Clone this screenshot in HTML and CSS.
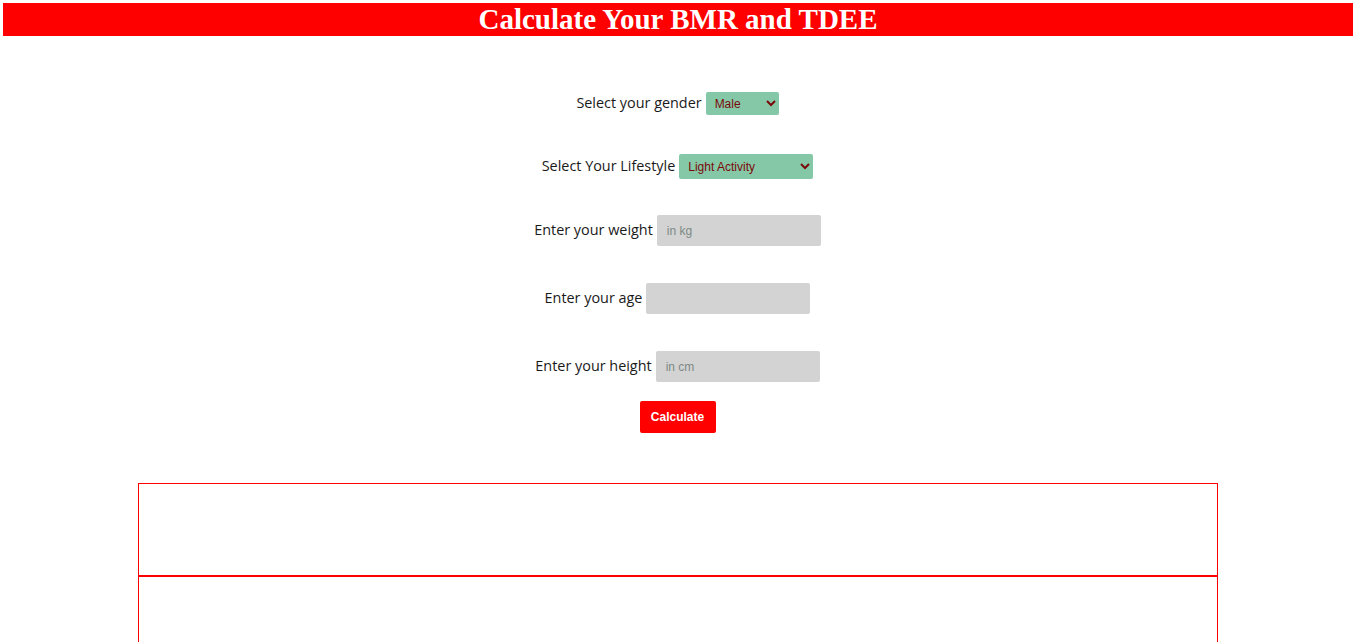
FILE: index.html
```html
<!DOCTYPE html>
<html>
<head>
<meta charset="utf-8">
<title>BMR and TDEE</title>
<link rel="stylesheet" href="styles.css">
</head>
<body>
<header class="banner"><h1 class="title">Calculate Your BMR and TDEE</h1></header>
<form class="calc">
  <div class="row row-gender">
    <label class="lbl" for="gender">Select your gender</label>
    <select id="gender" class="sel sel-gender"><option>Male</option><option>Female</option></select>
  </div>
  <div class="row row-life">
    <label class="lbl" for="life">Select Your Lifestyle</label>
    <select id="life" class="sel sel-life"><option>Light Activity</option><option>Sedentary</option></select>
  </div>
  <div class="row row-weight">
    <label class="lbl" for="weight">Enter your weight</label>
    <input id="weight" class="inp" type="text" placeholder="in kg">
  </div>
  <div class="row row-age">
    <label class="lbl" for="age">Enter your age</label>
    <input id="age" class="inp" type="text">
  </div>
  <div class="row row-height">
    <label class="lbl" for="height">Enter your height</label>
    <input id="height" class="inp" type="text" placeholder="in cm">
  </div>
  <div class="row row-btn">
    <button type="button" class="btn">Calculate</button>
  </div>
</form>
<section class="results">
  <div class="box box-top"></div>
  <div class="box box-bottom"></div>
</section>
</body>
</html>
```
FILE: styles.css
```css
html, body { margin: 0; padding: 0; background: #fff; }
body { overflow: hidden; height: 642px; }
.banner {
  margin: 3px 2px 0 3px;
  background: #ff0000;
  height: 33px;
  display: flex;
  align-items: center;
  justify-content: center;
}
.title {
  margin: 0;
  color: #fff;
  font-family: "Liberation Serif", "Times New Roman", serif;
  font-weight: bold;
  font-size: 29px;
  line-height: 33px;
}
.calc {
  display: flex;
  flex-direction: column;
  align-items: center;
  padding-top: 56px;
}
.row {
  display: flex;
  align-items: center;
  justify-content: center;
  gap: 4px;
}
.lbl {
  font-family: "Open Sans", "Lato", sans-serif;
  font-size: 14.4px;
  line-height: 18px;
  margin-top: -2px;
  color: #1a1a1a;
}
.sel {
  font-family: "Liberation Sans", Arial, sans-serif;
  font-size: 12px;
  color: #7a0a0a;
  background: #85c8a7;
  border: none;
  border-radius: 2px;
  padding: 0 5px;
}
.sel-gender { width: 73px; height: 23px; }
.sel-life { width: 134px; height: 25px; }
.inp {
  width: 164px;
  height: 31px;
  box-sizing: border-box;
  background: #d3d3d3;
  border: none;
  border-radius: 2px;
  padding: 0 10px;
  font-family: "Liberation Sans", Arial, sans-serif;
  font-size: 12px;
}
.inp::placeholder { color: #7d8a85; }
.row-gender { height: 23px; }
.row-life { height: 25px; margin-top: 39px; }
.row-weight { height: 31px; margin-top: 36px; }
.row-age { height: 31px; margin-top: 37px; }
.row-height { height: 31px; margin-top: 37px; }
.row-btn { height: 32px; margin-top: 19px; }
.btn {
  width: 76px;
  height: 32px;
  background: #ff0000;
  color: #fff;
  border: none;
  border-radius: 2px;
  font-family: "Liberation Sans", Arial, sans-serif;
  font-weight: bold;
  font-size: 12px;
}
.results {
  width: 1080px;
  margin: 50px auto 0;
}
.box {
  border: 1px solid #ff0000;
  box-sizing: border-box;
}
.box-top { height: 93px; }
.box-bottom { height: 67px; }
```
